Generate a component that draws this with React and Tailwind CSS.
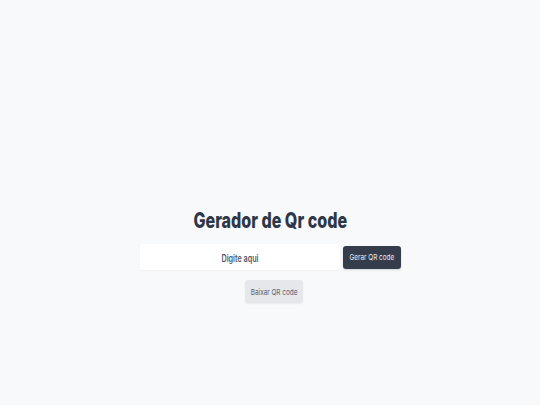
import React, { useState } from 'react';

const App = () => {
  const [text, setText] = useState('');

  return (
    <div className="min-h-screen w-full bg-[#f8f9fb] flex flex-col items-center pt-[204px] font-['Inter',sans-serif]">
      {/* Title */}
      <h1 className="text-[22px] leading-[32px] font-extrabold text-[#2d3748] whitespace-nowrap scale-x-[0.73]">
        Gerador de Qr code
      </h1>

      {/* Input row */}
      <div className="mt-[8px] flex items-center gap-[3px]">
        <div className="w-[200px] h-[26px] bg-white rounded-[2px] shadow-[0_1px_2px_rgba(0,0,0,0.04)]">
          <input
            type="text"
            value={text}
            onChange={(e) => setText(e.target.value)}
            placeholder="Digite aqui"
            className="w-full h-full bg-transparent text-center text-[10px] font-semibold text-[#4a5568] placeholder:text-[#525b69] outline-none scale-x-[0.72]"
          />
        </div>
        <button className="w-[58px] h-[23px] rounded-[3px] bg-[#353d4c] text-[#e8eaee] text-[8px] whitespace-nowrap shadow-[0_1px_2px_rgba(0,0,0,0.15)]">
          <span className="inline-block scale-x-[0.8]">Gerar QR code</span>
        </button>
      </div>

      {/* Download */}
      <button className="mt-[10px] ml-[8px] w-[58px] h-[23px] rounded-[3px] bg-[#e6e7ea] text-[#5a6270] text-[8px] whitespace-nowrap shadow-[0_1px_2px_rgba(0,0,0,0.06)]">
        <span className="inline-block scale-x-[0.8]">Baixar QR code</span>
      </button>
    </div>
  );
};

export default App;
